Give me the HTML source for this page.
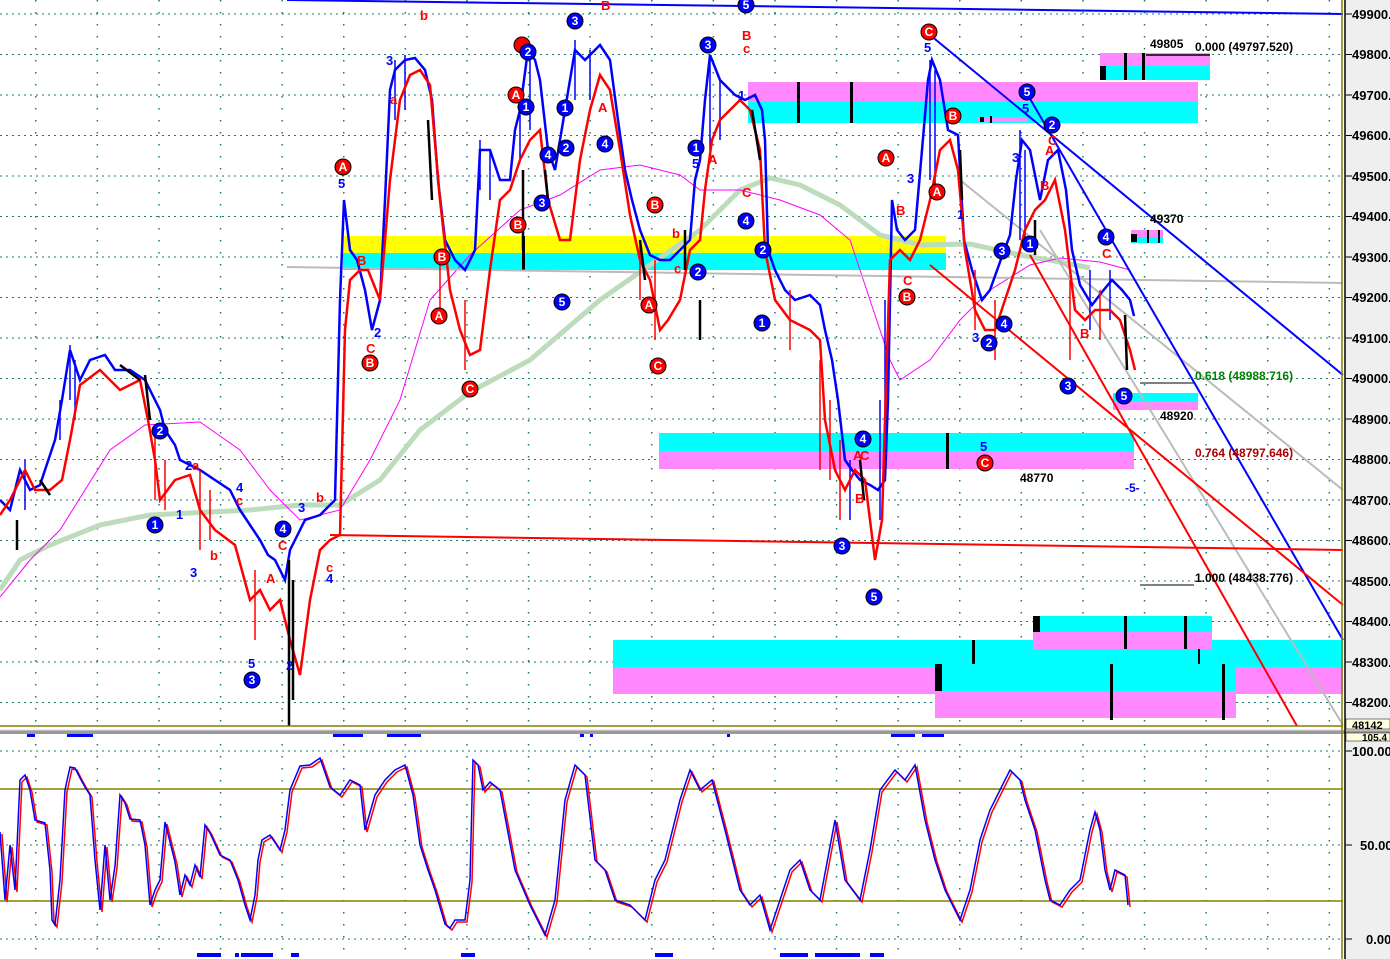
<!DOCTYPE html>
<html><head><meta charset="utf-8"><style>
html,body{margin:0;padding:0;background:#fff;width:1390px;height:959px;overflow:hidden}
svg{display:block;font-family:"Liberation Sans",sans-serif}
.ax{font-size:13px;font-weight:bold;fill:#000}
.lb{font-size:13px;font-weight:bold}
.ct{font-size:12px;font-weight:bold;fill:#fff;text-anchor:middle}
circle{r:8px}
.px{stroke-width:2.5px}
</style></head><body>
<svg width="1390" height="959" viewBox="0 0 1390 959" xmlns="http://www.w3.org/2000/svg">
<defs>
<pattern id="vg" x="35" y="0" width="61.6" height="12" patternUnits="userSpaceOnUse"><rect x="0" y="0" width="1.5" height="1.5" fill="#1c7a6a"/></pattern>
</defs>
<rect x="0" y="0" width="1343" height="959" fill="#fff"/>
<rect x="1345" y="0" width="45" height="959" fill="#efefef"/>
<rect x="0" y="0" width="1343" height="726" fill="url(#vg)"/>
<rect x="0" y="737" width="1343" height="222" fill="url(#vg)"/>
<g stroke="#1c7a6a" stroke-width="1" stroke-dasharray="2,4">
<line x1="0" y1="14" x2="1343" y2="14"/><line x1="0" y1="54.5" x2="1343" y2="54.5"/><line x1="0" y1="95" x2="1343" y2="95"/><line x1="0" y1="135.5" x2="1343" y2="135.5"/><line x1="0" y1="176" x2="1343" y2="176"/><line x1="0" y1="216.5" x2="1343" y2="216.5"/><line x1="0" y1="257" x2="1343" y2="257"/><line x1="0" y1="297.5" x2="1343" y2="297.5"/><line x1="0" y1="338" x2="1343" y2="338"/><line x1="0" y1="378.5" x2="1343" y2="378.5"/><line x1="0" y1="419" x2="1343" y2="419"/><line x1="0" y1="459.5" x2="1343" y2="459.5"/><line x1="0" y1="500" x2="1343" y2="500"/><line x1="0" y1="540.5" x2="1343" y2="540.5"/><line x1="0" y1="581" x2="1343" y2="581"/><line x1="0" y1="621.5" x2="1343" y2="621.5"/><line x1="0" y1="662" x2="1343" y2="662"/><line x1="0" y1="702.5" x2="1343" y2="702.5"/>
<line x1="0" y1="751" x2="1343" y2="751"/><line x1="0" y1="845" x2="1343" y2="845"/><line x1="0" y1="939" x2="1343" y2="939"/>
</g>
<rect x="748" y="82" width="450" height="20" fill="#ff88ff"/><rect x="748" y="102" width="450" height="21" fill="#00ffff"/>
<rect x="1100" y="53" width="110" height="13" fill="#ff88ff"/><rect x="1100" y="66" width="110" height="14" fill="#00ffff"/>
<rect x="343" y="236" width="603" height="17" fill="#ffff00"/><rect x="343" y="253" width="603" height="17" fill="#00ffff"/>
<rect x="659" y="433" width="475" height="18" fill="#00ffff"/><rect x="659" y="451" width="475" height="18" fill="#ff88ff"/>
<rect x="1131" y="230" width="32" height="7" fill="#ff88ff"/><rect x="1131" y="237" width="32" height="6" fill="#00ffff"/>
<rect x="1113" y="393" width="85" height="8" fill="#00ffff"/><rect x="1113" y="401" width="85" height="9" fill="#ff88ff"/>
<rect x="977" y="117" width="50" height="5" fill="#ff88ff"/>
<rect x="613" y="640" width="730" height="27" fill="#00ffff"/><rect x="613" y="667" width="730" height="27" fill="#ff88ff"/>
<rect x="1033" y="616" width="179" height="16" fill="#00ffff"/><rect x="1033" y="632" width="179" height="17" fill="#ff88ff"/>
<rect x="935" y="664" width="301" height="27" fill="#00ffff"/><rect x="935" y="691" width="301" height="27" fill="#ff88ff"/>
<g fill="#000">
<rect x="797" y="82" width="3" height="41"/><rect x="850" y="82" width="3" height="41"/><rect x="1100" y="66" width="6" height="14"/><rect x="1124" y="53" width="3" height="27"/><rect x="1142" y="53" width="3" height="27"/>
<rect x="522" y="236" width="3" height="34"/><rect x="946" y="433" width="3" height="36"/><rect x="1131" y="234" width="6" height="8"/><rect x="1147" y="230" width="2" height="13"/><rect x="1158" y="230" width="2" height="13"/>
<rect x="1033" y="616" width="7" height="16"/><rect x="1124" y="616" width="3" height="33"/><rect x="1184" y="616" width="3" height="33"/><rect x="1198" y="649" width="2" height="15"/>
<rect x="972" y="640" width="3" height="24"/><rect x="935" y="664" width="7" height="27"/><rect x="1110" y="664" width="3" height="56"/><rect x="1222" y="664" width="3" height="56"/>
<rect x="980" y="117" width="4" height="5"/><rect x="990" y="116" width="2" height="7"/>
</g>
<line x1="1146" y1="55" x2="1210" y2="55" stroke="#000" stroke-width="1.5"/>
<line x1="1140" y1="383" x2="1194" y2="383" stroke="#000" stroke-width="1"/>
<line x1="1140" y1="585" x2="1194" y2="585" stroke="#000" stroke-width="1"/>
<polyline fill="none" stroke="#bcdcbc" stroke-width="5" points="0,590 20,560 50,545 100,525 150,515 250,510 300,505 340,505 380,480 420,430 470,392 530,360 600,300 650,265 700,230 740,190 770,178 800,185 840,205 880,235 920,245 970,244 1020,255 1060,262 1090,268"/>
<polyline fill="none" stroke="#ff00ff" stroke-width="1" points="0,597 30,560 60,530 110,450 145,425 200,422 240,450 270,490 300,520 340,510 370,460 400,400 430,300 470,255 520,210 560,195 600,170 640,165 680,175 700,190 740,190 780,200 820,215 850,240 870,300 890,360 900,380 930,360 960,320 990,290 1030,265 1060,258 1100,262 1130,270"/>
<polyline fill="none" stroke="#bbb" stroke-width="2" points="287,267 1343,283"/>
<line x1="960" y1="180" x2="1343" y2="490" stroke="#bbb" stroke-width="2"/>
<line x1="1040" y1="230" x2="1343" y2="725" stroke="#bbb" stroke-width="2"/>
<line x1="287" y1="0" x2="1343" y2="14" stroke="#0000ff" stroke-width="2"/>
<line x1="930" y1="35" x2="1343" y2="375" stroke="#0000ff" stroke-width="2"/>
<line x1="1025" y1="90" x2="1343" y2="640" stroke="#0000ff" stroke-width="2"/>
<line x1="330" y1="535" x2="1343" y2="550" stroke="#ff0000" stroke-width="2"/>
<line x1="930" y1="265" x2="1343" y2="605" stroke="#ff0000" stroke-width="2"/>
<line x1="1030" y1="255" x2="1297" y2="726" stroke="#ff0000" stroke-width="2"/>
<!-- noise spikes blue -->
<g stroke="#0000ff" stroke-width="1.5">
<line x1="70" y1="345" x2="70" y2="400"/><line x1="75" y1="360" x2="75" y2="420"/><line x1="60" y1="400" x2="60" y2="440"/><line x1="25" y1="460" x2="25" y2="510"/><line x1="395" y1="60" x2="395" y2="120"/><line x1="405" y1="55" x2="405" y2="110"/><line x1="480" y1="140" x2="480" y2="190"/><line x1="490" y1="150" x2="490" y2="200"/><line x1="520" y1="90" x2="520" y2="160"/><line x1="530" y1="45" x2="530" y2="130"/><line x1="575" y1="40" x2="575" y2="100"/><line x1="590" y1="50" x2="590" y2="100"/><line x1="710" y1="55" x2="710" y2="150"/><line x1="720" y1="80" x2="720" y2="140"/><line x1="930" y1="60" x2="930" y2="180"/><line x1="935" y1="70" x2="935" y2="200"/><line x1="1020" y1="130" x2="1020" y2="240"/><line x1="1025" y1="150" x2="1025" y2="250"/><line x1="880" y1="400" x2="880" y2="520"/><line x1="885" y1="300" x2="885" y2="480"/><line x1="850" y1="460" x2="850" y2="520"/><line x1="1090" y1="270" x2="1090" y2="330"/><line x1="1110" y1="270" x2="1110" y2="320"/>
</g>
<polyline class="px" fill="none" stroke="#0000ff" stroke-width="2" points="0,500 10,510 20,470 30,490 40,485 55,440 62,400 70,350 80,380 90,360 105,355 115,370 130,370 145,380 160,410 165,430 175,445 180,460 200,470 215,480 230,490 240,510 250,525 260,540 268,555 275,560 285,580 290,550 295,540 305,520 320,515 335,500 340,300 344,200 350,250 357,260 365,290 372,330 380,300 385,200 390,90 395,70 405,60 415,58 425,70 432,100 438,180 445,240 455,260 465,270 475,250 480,150 490,150 500,180 510,180 515,130 520,110 528,50 535,60 540,80 548,150 555,170 560,140 565,110 575,50 585,60 600,45 610,60 618,120 625,170 632,200 640,230 650,255 660,260 670,260 680,250 690,240 695,180 700,160 705,100 710,55 720,80 735,95 745,100 755,95 762,110 765,140 768,250 775,270 785,290 795,300 810,295 820,305 825,330 832,360 838,400 845,460 852,470 860,480 870,485 878,490 885,480 888,400 892,200 897,230 905,240 915,230 922,150 928,80 932,60 940,80 948,130 958,135 964,240 972,270 982,300 990,290 1000,262 1010,235 1016,180 1022,140 1030,150 1040,200 1048,160 1058,150 1066,190 1072,250 1080,285 1092,305 1102,292 1112,280 1122,290 1130,300 1134,316"/>
<g stroke="#ff0000" stroke-width="1.5">
<line x1="155" y1="430" x2="155" y2="500"/><line x1="165" y1="460" x2="165" y2="510"/><line x1="200" y1="470" x2="200" y2="550"/><line x1="210" y1="490" x2="210" y2="540"/><line x1="255" y1="570" x2="255" y2="640"/><line x1="440" y1="250" x2="440" y2="320"/><line x1="465" y1="300" x2="465" y2="370"/><line x1="640" y1="240" x2="640" y2="300"/><line x1="655" y1="260" x2="655" y2="340"/><line x1="790" y1="290" x2="790" y2="350"/><line x1="820" y1="360" x2="820" y2="470"/><line x1="830" y1="400" x2="830" y2="480"/><line x1="840" y1="440" x2="840" y2="520"/><line x1="975" y1="270" x2="975" y2="330"/><line x1="995" y1="300" x2="995" y2="360"/><line x1="1070" y1="280" x2="1070" y2="360"/><line x1="1100" y1="290" x2="1100" y2="340"/>
</g>
<polyline class="px" fill="none" stroke="#ff0000" stroke-width="2" points="0,515 10,500 25,470 35,490 50,490 62,480 70,440 80,385 100,370 120,390 140,380 148,420 155,460 160,500 175,480 190,475 200,510 215,530 235,545 250,600 260,590 270,610 280,600 290,640 300,675 310,600 320,550 330,540 340,535 345,330 350,280 360,270 368,270 380,300 390,180 400,100 410,75 420,70 430,85 440,200 450,290 460,330 470,355 480,350 490,270 500,200 510,190 520,160 530,140 540,130 548,200 560,240 570,240 580,160 590,110 600,75 610,90 620,150 630,215 640,260 650,280 660,330 668,320 680,300 690,250 700,240 705,190 712,140 720,120 730,110 740,100 750,110 760,150 765,250 775,300 790,320 810,330 820,340 825,420 835,470 845,490 855,470 865,480 875,560 882,520 885,420 890,260 900,250 910,260 920,240 930,200 940,150 950,140 958,170 965,250 975,310 985,330 995,330 1005,300 1015,270 1025,230 1035,210 1045,200 1055,180 1065,230 1075,310 1085,320 1095,310 1110,310 1120,320 1130,350 1135,370"/>
<g stroke="#000" stroke-width="2.5">
<line x1="17" y1="520" x2="17" y2="550"/><line x1="145" y1="375" x2="150" y2="420"/><line x1="289" y1="560" x2="289" y2="726"/><line x1="293" y1="580" x2="293" y2="700"/><line x1="428" y1="120" x2="432" y2="200"/><line x1="523" y1="170" x2="523" y2="250"/><line x1="545" y1="170" x2="548" y2="200"/><line x1="640" y1="240" x2="645" y2="280"/><line x1="752" y1="110" x2="760" y2="160"/><line x1="860" y1="460" x2="864" y2="500"/><line x1="960" y1="150" x2="962" y2="200"/><line x1="1035" y1="220" x2="1035" y2="255"/><line x1="1125" y1="315" x2="1127" y2="370"/><line x1="40" y1="480" x2="50" y2="495"/><line x1="120" y1="365" x2="140" y2="380"/><line x1="700" y1="300" x2="700" y2="340"/><line x1="685" y1="230" x2="685" y2="270"/>
</g>
<g class="lb" fill="#000" style="font-size:12px">
<text x="1150" y="48">49805</text><text x="1195" y="51">0.000 (49797.520)</text>
<text x="1150" y="223">49370</text>
<text x="1195" y="380" fill="#008000">0.618 (48988.716)</text>
<text x="1160" y="420">48920</text>
<text x="1195" y="457" fill="#aa0000">0.764 (48797.646)</text>
<text x="1020" y="482">48770</text>
<text x="1195" y="582">1.000 (48438.776)</text>
<text x="1125" y="492" fill="#0000ff">-5-</text>
</g>
<g stroke="#000" stroke-width="1">
<circle cx="155" cy="525" r="7" fill="#0000ff"/><circle cx="160" cy="431" r="7" fill="#0000ff"/><circle cx="252" cy="680" r="7" fill="#0000ff"/><circle cx="283" cy="529" r="7" fill="#0000ff"/>
<circle cx="343" cy="167" r="7" fill="#ff0000"/><circle cx="370" cy="363" r="7" fill="#ff0000"/><circle cx="442" cy="257" r="7" fill="#ff0000"/><circle cx="439" cy="316" r="7" fill="#ff0000"/><circle cx="470" cy="389" r="7" fill="#ff0000"/>
<circle cx="518" cy="225" r="7" fill="#ff0000"/><circle cx="516" cy="95" r="7" fill="#ff0000"/><circle cx="522" cy="45" r="7" fill="#ff0000"/><circle cx="528" cy="52" r="7" fill="#0000ff"/><circle cx="526" cy="107" r="7" fill="#0000ff"/><circle cx="575" cy="21" r="7" fill="#0000ff"/><circle cx="565" cy="108" r="7" fill="#0000ff"/><circle cx="566" cy="148" r="7" fill="#0000ff"/><circle cx="548" cy="155" r="7" fill="#0000ff"/><circle cx="542" cy="203" r="7" fill="#0000ff"/><circle cx="562" cy="302" r="7" fill="#0000ff"/><circle cx="605" cy="144" r="7" fill="#0000ff"/>
<circle cx="655" cy="205" r="7" fill="#ff0000"/><circle cx="649" cy="305" r="7" fill="#ff0000"/><circle cx="658" cy="366" r="7" fill="#ff0000"/><circle cx="698" cy="272" r="7" fill="#0000ff"/><circle cx="708" cy="45" r="7" fill="#0000ff"/><circle cx="696" cy="148" r="7" fill="#0000ff"/><circle cx="746" cy="5" r="7" fill="#0000ff"/><circle cx="746" cy="221" r="7" fill="#0000ff"/><circle cx="763" cy="250" r="7" fill="#0000ff"/><circle cx="762" cy="323" r="7" fill="#0000ff"/>
<circle cx="886" cy="158" r="7" fill="#ff0000"/><circle cx="863" cy="439" r="7" fill="#0000ff"/><circle cx="842" cy="546" r="7" fill="#0000ff"/><circle cx="874" cy="597" r="7" fill="#0000ff"/><circle cx="907" cy="297" r="7" fill="#ff0000"/><circle cx="937" cy="192" r="7" fill="#ff0000"/><circle cx="953" cy="116" r="7" fill="#ff0000"/><circle cx="929" cy="32" r="7" fill="#ff0000"/><circle cx="985" cy="463" r="7" fill="#ff0000"/>
<circle cx="1027" cy="92" r="7" fill="#0000ff"/><circle cx="1052" cy="125" r="7" fill="#0000ff"/><circle cx="1002" cy="251" r="7" fill="#0000ff"/><circle cx="1004" cy="324" r="7" fill="#0000ff"/><circle cx="989" cy="343" r="7" fill="#0000ff"/><circle cx="1030" cy="244" r="7" fill="#0000ff"/><circle cx="1068" cy="386" r="7" fill="#0000ff"/><circle cx="1106" cy="237" r="7" fill="#0000ff"/><circle cx="1124" cy="396" r="7" fill="#0000ff"/>
</g>
<g class="ct">
<text x="155" y="529">1</text><text x="160" y="435">2</text><text x="252" y="684">3</text><text x="283" y="533">4</text>
<text x="343" y="171">A</text><text x="370" y="367">B</text><text x="442" y="261">B</text><text x="439" y="320">A</text><text x="470" y="393">C</text>
<text x="518" y="229">B</text><text x="516" y="99">A</text><text x="528" y="56">2</text><text x="526" y="111">1</text><text x="575" y="25">3</text><text x="565" y="112">1</text><text x="566" y="152">2</text><text x="548" y="159">4</text><text x="542" y="207">3</text><text x="562" y="306">5</text><text x="605" y="148">4</text>
<text x="655" y="209">B</text><text x="649" y="309">A</text><text x="658" y="370">C</text><text x="698" y="276">2</text><text x="708" y="49">3</text><text x="696" y="152">1</text><text x="746" y="9">5</text><text x="746" y="225">4</text><text x="763" y="254">2</text><text x="762" y="327">1</text>
<text x="886" y="162">A</text><text x="863" y="443">4</text><text x="842" y="550">3</text><text x="874" y="601">5</text><text x="907" y="301">B</text><text x="937" y="196">A</text><text x="953" y="120">B</text><text x="929" y="36">C</text><text x="985" y="467">C</text>
<text x="1027" y="96">5</text><text x="1052" y="129">2</text><text x="1002" y="255">3</text><text x="1004" y="328">4</text><text x="989" y="347">2</text><text x="1030" y="248">1</text><text x="1068" y="390">3</text><text x="1106" y="241">4</text><text x="1124" y="400">5</text>
</g>
<g class="lb" fill="#0000ff">
<text x="338" y="188">5</text><text x="386" y="65">3</text><text x="176" y="519">1</text><text x="185" y="470">2</text><text x="190" y="577">3</text><text x="236" y="492">4</text><text x="248" y="668">5</text><text x="286" y="670">2</text><text x="298" y="512">3</text><text x="326" y="583">4</text><text x="374" y="337">2</text><text x="692" y="168">5</text><text x="924" y="52">5</text><text x="1022" y="113">5</text><text x="1012" y="162">3</text><text x="907" y="183">3</text><text x="957" y="219">1</text><text x="972" y="342">3</text><text x="980" y="451">5</text><text x="738" y="100">1</text>
</g>
<g class="lb" fill="#ff0000">
<text x="420" y="20">b</text><text x="390" y="104">a</text><text x="601" y="10">B</text><text x="598" y="112">A</text><text x="742" y="40">B</text><text x="743" y="53">c</text><text x="742" y="197">C</text><text x="708" y="164">A</text><text x="366" y="353">C</text><text x="357" y="265">B</text><text x="236" y="505">c</text><text x="192" y="470">a</text><text x="210" y="560">b</text><text x="266" y="583">A</text><text x="278" y="550">C</text><text x="316" y="502">b</text><text x="326" y="572">c</text><text x="896" y="215">B</text><text x="903" y="285">C</text><text x="1045" y="155">A</text><text x="1040" y="190">B</text><text x="1048" y="145">C</text><text x="1080" y="338">B</text><text x="1102" y="258">C</text><text x="853" y="460">A</text><text x="860" y="460">C</text><text x="855" y="503">B</text><text x="672" y="238">b</text><text x="674" y="273">c</text>
</g>
<line x1="0" y1="726" x2="1343" y2="726" stroke="#808000" stroke-width="1.5"/>
<rect x="0" y="730" width="1390" height="4" fill="#9a9a9a"/>
<line x1="0" y1="730" x2="1390" y2="730" stroke="#ddd"/>
<line x1="1342" y1="0" x2="1342" y2="959" stroke="#808000" stroke-width="1.5"/>
<line x1="1345" y1="0" x2="1345" y2="959" stroke="#000" stroke-width="1.5"/>
<line x1="0" y1="789" x2="1343" y2="789" stroke="#808000" stroke-width="1.5"/>
<line x1="0" y1="901" x2="1343" y2="901" stroke="#808000" stroke-width="1.5"/>
<g fill="#0000ff">
<rect x="27" y="734" width="8" height="3"/><rect x="67" y="734" width="26" height="3"/><rect x="333" y="734" width="30" height="3"/><rect x="387" y="734" width="34" height="3"/><rect x="580" y="734" width="4" height="3"/><rect x="590" y="734" width="3" height="3"/><rect x="727" y="734" width="3" height="3"/><rect x="891" y="734" width="24" height="3"/><rect x="922" y="734" width="22" height="3"/>
<rect x="197" y="953" width="24" height="4"/><rect x="235" y="953" width="4" height="4"/><rect x="241" y="953" width="32" height="4"/><rect x="291" y="953" width="8" height="4"/><rect x="461" y="953" width="14" height="4"/><rect x="655" y="953" width="18" height="4"/><rect x="780" y="953" width="28" height="4"/><rect x="815" y="953" width="45" height="4"/><rect x="870" y="953" width="14" height="4"/>
</g>
<polyline fill="none" stroke="#ff0000" stroke-width="1.5" transform="translate(2,2)" points="0,832 5,900 10,845 15,890 20,780 25,775 30,790 35,820 45,823 50,870 52,920 55,925 60,880 65,790 70,767 75,768 80,778 85,787 90,795 95,860 100,910 105,845 110,900 115,866 120,795 125,803 130,819 140,820 145,845 150,905 155,890 160,880 165,822 175,862 180,895 185,875 190,885 195,865 200,877 205,825 210,833 220,855 230,860 238,880 245,905 250,920 255,895 258,860 262,840 270,835 280,850 285,830 290,790 300,766 310,765 320,758 330,787 340,795 350,780 360,785 365,830 375,795 385,780 395,770 405,765 413,795 420,845 428,870 435,890 445,924 450,928 455,920 465,920 470,880 473,760 478,765 483,790 490,782 500,790 515,870 530,905 545,935 555,900 565,800 575,765 585,775 595,860 605,870 615,900 630,905 645,920 655,880 665,860 680,800 690,770 700,790 712,780 725,830 740,890 750,905 760,895 770,930 780,900 790,870 800,860 810,890 820,900 835,820 845,880 860,900 870,850 880,790 895,770 905,780 915,765 925,820 935,860 945,890 960,920 970,890 980,840 990,810 1000,790 1010,770 1020,780 1025,800 1035,830 1045,880 1050,900 1060,905 1070,890 1080,880 1090,830 1095,812 1100,830 1105,870 1110,890 1115,870 1125,875 1128,905"/>
<polyline fill="none" stroke="#0000ff" stroke-width="1.5" points="0,832 5,900 10,845 15,890 20,780 25,775 30,790 35,820 45,823 50,870 52,920 55,925 60,880 65,790 70,767 75,768 80,778 85,787 90,795 95,860 100,910 105,845 110,900 115,866 120,795 125,803 130,819 140,820 145,845 150,905 155,890 160,880 165,822 175,862 180,895 185,875 190,885 195,865 200,877 205,825 210,833 220,855 230,860 238,880 245,905 250,920 255,895 258,860 262,840 270,835 280,850 285,830 290,790 300,766 310,765 320,758 330,787 340,795 350,780 360,785 365,830 375,795 385,780 395,770 405,765 413,795 420,845 428,870 435,890 445,924 450,928 455,920 465,920 470,880 473,760 478,765 483,790 490,782 500,790 515,870 530,905 545,935 555,900 565,800 575,765 585,775 595,860 605,870 615,900 630,905 645,920 655,880 665,860 680,800 690,770 700,790 712,780 725,830 740,890 750,905 760,895 770,930 780,900 790,870 800,860 810,890 820,900 835,820 845,880 860,900 870,850 880,790 895,770 905,780 915,765 925,820 935,860 945,890 960,920 970,890 980,840 990,810 1000,790 1010,770 1020,780 1025,800 1035,830 1045,880 1050,900 1060,905 1070,890 1080,880 1090,830 1095,812 1100,830 1105,870 1110,890 1115,870 1125,875 1128,905"/>
<g stroke="#000" stroke-width="1">
<line x1="1346" y1="14" x2="1352" y2="14"/><line x1="1346" y1="54.5" x2="1352" y2="54.5"/><line x1="1346" y1="95" x2="1352" y2="95"/><line x1="1346" y1="135.5" x2="1352" y2="135.5"/><line x1="1346" y1="176" x2="1352" y2="176"/><line x1="1346" y1="216.5" x2="1352" y2="216.5"/><line x1="1346" y1="257" x2="1352" y2="257"/><line x1="1346" y1="297.5" x2="1352" y2="297.5"/><line x1="1346" y1="338" x2="1352" y2="338"/><line x1="1346" y1="378.5" x2="1352" y2="378.5"/><line x1="1346" y1="419" x2="1352" y2="419"/><line x1="1346" y1="459.5" x2="1352" y2="459.5"/><line x1="1346" y1="500" x2="1352" y2="500"/><line x1="1346" y1="540.5" x2="1352" y2="540.5"/><line x1="1346" y1="581" x2="1352" y2="581"/><line x1="1346" y1="621.5" x2="1352" y2="621.5"/><line x1="1346" y1="662" x2="1352" y2="662"/><line x1="1346" y1="702.5" x2="1352" y2="702.5"/><line x1="1346" y1="751" x2="1352" y2="751"/><line x1="1346" y1="845" x2="1352" y2="845"/><line x1="1346" y1="939" x2="1352" y2="939"/>
</g>
<g class="ax">
<text x="1352" y="19">49900.</text><text x="1352" y="59">49800.</text><text x="1352" y="100">49700.</text><text x="1352" y="140">49600.</text><text x="1352" y="181">49500.</text><text x="1352" y="221">49400.</text><text x="1352" y="262">49300.</text><text x="1352" y="302">49200.</text><text x="1352" y="343">49100.</text><text x="1352" y="383">49000.</text><text x="1352" y="424">48900.</text><text x="1352" y="464">48800.</text><text x="1352" y="505">48700.</text><text x="1352" y="545">48600.</text><text x="1352" y="586">48500.</text><text x="1352" y="626">48400.</text><text x="1352" y="667">48300.</text><text x="1352" y="707">48200.</text>
<text x="1352" y="756">100.00</text><text x="1360" y="850">50.00</text><text x="1366" y="944">0.00</text>
</g>
<rect x="1346" y="719" width="44" height="10" fill="#ffffe0" stroke="#000" stroke-width="0.5"/>
<text x="1352" y="729" class="ax" style="font-size:11px">48142</text>
<rect x="1346" y="733" width="44" height="8" fill="#ffffe0" stroke="#000" stroke-width="0.5"/>
<text x="1362" y="741" class="ax" style="font-size:10px">105.4</text>
</svg>
</body></html>
